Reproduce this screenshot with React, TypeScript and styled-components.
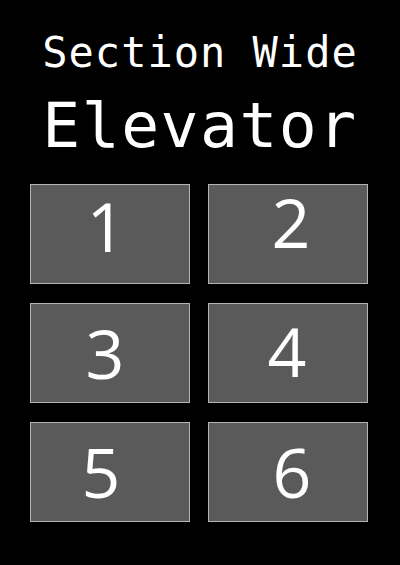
import styled, { createGlobalStyle } from "styled-components";

const GlobalStyle = createGlobalStyle`
  html, body {
    margin: 0;
    padding: 0;
    background: #000;
  }
`;

interface Floor {
  label: string;
  dx: number;
  dy: number;
}

// small per-button offsets, the digits are not perfectly centered in the reference
const floors: Floor[] = [
  { label: "1", dx: -4, dy: -8 },
  { label: "2", dx: 3, dy: -12 },
  { label: "3", dx: -5, dy: 0 },
  { label: "4", dx: -1, dy: -2 },
  { label: "5", dx: -9, dy: 0 },
  { label: "6", dx: 4, dy: 0 },
];

const App = () => {
  return (
    <S.Page>
      <GlobalStyle />
      <S.Header>
        <S.Subtitle>Section Wide</S.Subtitle>
        <S.Title>Elevator</S.Title>
      </S.Header>
      <S.Grid>
        {floors.map((f) => (
          <S.FloorButton key={f.label}>
            <S.Digit $dx={f.dx} $dy={f.dy}>
              {f.label}
            </S.Digit>
          </S.FloorButton>
        ))}
      </S.Grid>
    </S.Page>
  );
};

namespace S {
  export const Page = styled.div`
    width: 400px;
    height: 565px;
    background: #000;
    color: #fff;
    padding-top: 28px;
    box-sizing: border-box;
    display: flex;
    flex-direction: column;
    align-items: center;
  `;

  export const Header = styled.div`
    display: flex;
    flex-direction: column;
    align-items: center;
    gap: 8px;
    font-family: "DejaVu Sans Mono", monospace;
  `;

  export const Subtitle = styled.div`
    font-size: 42px;
    line-height: 50px;
    letter-spacing: 1px;
  `;

  export const Title = styled.div`
    font-size: 63px;
    line-height: 80px;
    letter-spacing: 1.5px;
  `;

  export const Grid = styled.div`
    margin-top: 18px;
    margin-right: 2px;
    display: grid;
    grid-template-columns: repeat(2, 160px);
    grid-auto-rows: 100px;
    column-gap: 18px;
    row-gap: 19px;
  `;

  export const FloorButton = styled.div`
    box-sizing: border-box;
    background: #5a5a5a;
    border: 1px solid #b4b4b4;
    display: flex;
    align-items: center;
    justify-content: center;
  `;

  export const Digit = styled.span<{ $dx: number; $dy: number }>`
    font-family: "Open Sans", "Noto Sans", sans-serif;
    font-size: 68px;
    line-height: 1;
    color: #fff;
    transform: translate(${(p) => p.$dx}px, ${(p) => p.$dy}px);
  `;
}

export default App;
